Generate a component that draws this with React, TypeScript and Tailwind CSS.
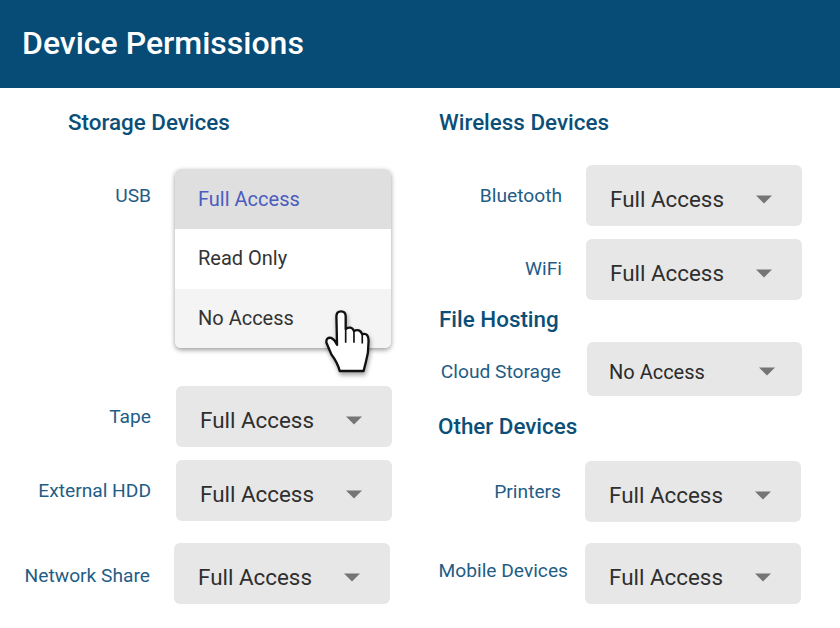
import React from "react";

function Caret() {
  return (
    <svg width="16" height="9" viewBox="0 0 16 9" className="shrink-0">
      <path d="M0 0.5 H16 L8 8.5 Z" fill="#757575" />
    </svg>
  );
}

function Select({ value = "Full Access", small = false }: { value?: string; small?: boolean }) {
  return (
    <div
      className={
        small
          ? "w-[215px] h-[54px] rounded-md bg-[#e7e7e7] flex items-center pl-[22px] pr-[27px] pt-[5px] justify-between text-[20px] text-[#2b2b2b]"
          : "w-[216px] h-[61px] rounded-md bg-[#e7e7e7] flex items-center pl-[24px] pr-[30px] pt-[8px] justify-between text-[22.4px] text-[#2f2f2f]"
      }
    >
      <span>{value}</span>
      <Caret />
    </div>
  );
}

function Label({ children, w, up = "" }: { children: React.ReactNode; w: string; up?: string }) {
  return <div className={`${w} ${up} text-right text-[19.2px] leading-[24px] text-[#1f5d85] shrink-0`}>{children}</div>;
}

function Hand() {
  return (
    <svg
      viewBox="490 445 150 205"
      width="50"
      height="68"
      className="absolute left-[148px] top-[139px] drop-shadow-[1px_3px_2px_rgba(0,0,0,0.35)]"
    >
      <path
        d="M530 470 Q530 455 544 455 Q558 455 558 470 L558 508 Q575 498 583 514 Q600 506 608 524 Q627 518 627 545 L625 580 Q620 605 612 635 L540 635 Q534 610 515 585 L500 550 Q498 533 514 535 Q525 540 532 556 Z"
        fill="#fff"
        stroke="#111"
        strokeWidth="7"
        strokeLinejoin="round"
      />
      <path d="M558 508 L558 550 M583 514 L583 550 M608 524 L608 552" fill="none" stroke="#111" strokeWidth="5" />
    </svg>
  );
}

function Menu() {
  return (
    <div className="relative w-[216px] h-[179px] rounded-md shadow-[0_2px_5px_rgba(0,0,0,0.4)] bg-white text-[20px] text-[#333]">
      <div className="h-[60px] rounded-t-md bg-[#dfdfdf] flex items-center pl-[23px] text-[#4a5cc0]">Full Access</div>
      <div className="h-[60px] flex items-center pl-[23px] pb-[2px]">Read Only</div>
      <div className="h-[59px] rounded-b-md bg-[#f4f4f4] flex items-center pl-[23px] pb-[2px]">No Access</div>
      <Hand />
    </div>
  );
}

function Heading({ children, className = "" }: { children: React.ReactNode; className?: string }) {
  return <h2 className={`text-[22.4px] leading-[28px] font-medium text-[#0b4f78] ${className}`}>{children}</h2>;
}

export default function App() {
  return (
    <div className="w-[840px] h-[628px] bg-white overflow-hidden font-['Roboto',sans-serif]">
      <header className="h-[88px] bg-[#064c76] flex items-center pl-[22px]">
        <h1 className="text-[32px] font-medium text-white pb-[2px]">Device Permissions</h1>
      </header>
      <div className="flex">
        <section className="w-[420px] flex flex-col">
          <Heading className="ml-[68px] mt-[20px]">Storage Devices</Heading>
          <div className="flex ml-[23px] mt-[33px]">
            <Label w="w-[128px]" up="pt-[15px]">USB</Label>
            <div className="ml-[24px]"><Menu /></div>
          </div>
          <div className="flex ml-[23px] mt-[38px]">
            <Label w="w-[128px]" up="pt-[19px]">Tape</Label>
            <div className="ml-[25px]"><Select /></div>
          </div>
          <div className="flex ml-[23px] mt-[13px]">
            <Label w="w-[128px]" up="pt-[19px]">External HDD</Label>
            <div className="ml-[25px]"><Select /></div>
          </div>
          <div className="flex ml-[21px] mt-[22px]">
            <Label w="w-[129px]" up="pt-[21px]">Network Share</Label>
            <div className="ml-[24px]"><Select /></div>
          </div>
        </section>
        <section className="flex-1 flex flex-col">
          <Heading className="ml-[19px] mt-[20px]">Wireless Devices</Heading>
          <div className="flex mt-[29px]">
            <Label w="w-[142px]" up="pt-[19px]">Bluetooth</Label>
            <div className="ml-[24px]"><Select /></div>
          </div>
          <div className="flex mt-[13px]">
            <Label w="w-[142px]" up="pt-[18px]">WiFi</Label>
            <div className="ml-[24px]"><Select /></div>
          </div>
          <Heading className="ml-[19px] mt-[5px]">File Hosting</Heading>
          <div className="flex mt-[9px]">
            <Label w="w-[141px]" up="pt-[18px]">Cloud Storage</Label>
            <div className="ml-[26px]"><Select value="No Access" small /></div>
          </div>
          <Heading className="ml-[18px] mt-[16px]">Other Devices</Heading>
          <div className="flex mt-[21px]">
            <Label w="w-[141px]" up="pt-[19px]">Printers</Label>
            <div className="ml-[24px]"><Select /></div>
          </div>
          <div className="flex mt-[21px]">
            <Label w="w-[148px]" up="pt-[16px]">Mobile Devices</Label>
            <div className="ml-[17px]"><Select /></div>
          </div>
        </section>
      </div>
    </div>
  );
}
